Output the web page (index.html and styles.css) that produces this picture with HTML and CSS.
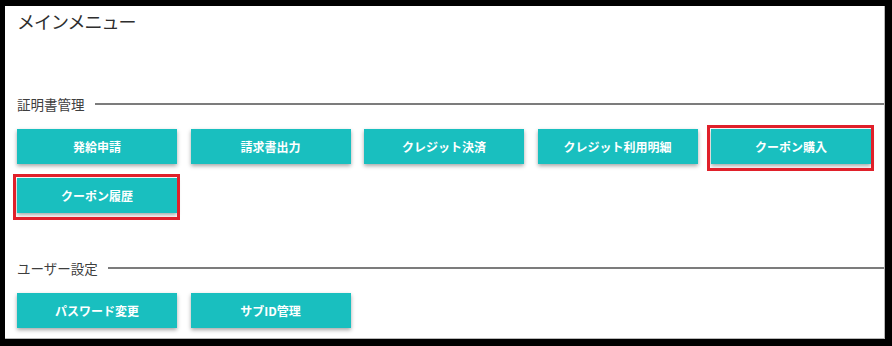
FILE: index.html
```html
<!DOCTYPE html>
<html lang="ja">
<head>
<meta charset="utf-8">
<title>メインメニュー</title>
<link rel="stylesheet" href="styles.css">
</head>
<body>
<div class="frame">
  <h1 class="title">メインメニュー</h1>

  <section class="section first">
    <div class="section-head"><span class="section-label">証明書管理</span><span class="rule"></span></div>
    <div class="btn-grid">
      <a class="btn">発給申請</a>
      <a class="btn">請求書出力</a>
      <a class="btn">クレジット決済</a>
      <a class="btn">クレジット利用明細</a>
      <a class="btn marked">クーポン購入</a>
      <a class="btn marked">クーポン履歴</a>
    </div>
  </section>

  <section class="section second">
    <div class="section-head"><span class="section-label">ユーザー設定</span><span class="rule"></span></div>
    <div class="btn-grid">
      <a class="btn">パスワード変更</a>
      <a class="btn">サブID管理</a>
    </div>
  </section>
</div>
</body>
</html>
```

FILE: styles.css
```css
html, body {
  margin: 0;
  padding: 0;
  background: #000;
}

body {
  width: 892px;
  height: 346px;
  overflow: hidden;
  font-family: "Noto Sans CJK JP", "Noto Sans", sans-serif;
}

.frame {
  box-sizing: border-box;
  margin: 6px 7px 7px 5px;
  width: 880px;
  height: 333px;
  background: #fff;
  border-right: 1px solid #b8b8b8;
  border-bottom: 1px solid #b8b8b8;
  padding-left: 12px;
}

.title {
  margin: 0;
  padding-top: 2px;
  font-size: 18px;
  line-height: 26px;
  font-weight: 400;
  color: #2e2e2e;
  letter-spacing: -1px;
}

.section.first {
  margin-top: 60px;
}

.section.second {
  margin-top: 45px;
}

.section-head {
  display: flex;
  align-items: center;
  height: 20px;
}

.section-label {
  font-size: 13.5px;
  line-height: 20px;
  color: #3e3e3e;
  font-weight: 400;
}

.rule {
  flex: 1;
  height: 2px;
  background: #7c7c7c;
  margin-left: 10px;
}

.btn-grid {
  display: flex;
  flex-wrap: wrap;
  column-gap: 13.5px;
  row-gap: 14px;
  margin-top: 15px;
}

.btn {
  position: relative;
  display: flex;
  align-items: center;
  justify-content: center;
  width: 160px;
  height: 35px;
  background: #19bfbf;
  color: #fff;
  font-size: 12px;
  font-weight: 700;
  box-shadow: 0 2px 4px rgba(0, 0, 0, 0.35);
  cursor: pointer;
}

.btn.marked::after {
  content: "";
  position: absolute;
  top: -4px;
  left: -4px;
  right: -3px;
  bottom: -7px;
  border: 3px solid #e0202a;
}
```
